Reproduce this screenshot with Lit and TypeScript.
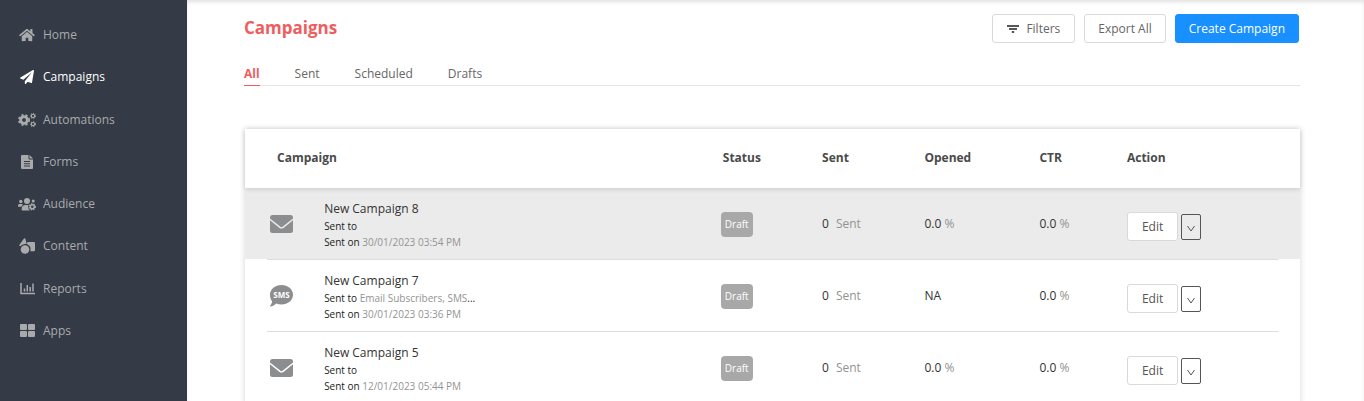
import { LitElement, html, svg, css, nothing, TemplateResult } from "lit";
import { customElement, property, state } from "lit/decorators.js";
import { classMap } from "lit/directives/class-map.js";

const gear = (cx: number, cy: number, r: number, teeth: number, w: number, hole = 0.44) => {
  const step = (2 * Math.PI * (r + w / 2)) / (teeth * 2);
  return svg`
    <circle cx=${cx} cy=${cy} r=${(r * (1 + hole)) / 2} fill="none" stroke="currentColor" stroke-width=${r * (1 - hole)}></circle>
    <circle cx=${cx} cy=${cy} r=${r + w / 2 - 0.2} fill="none" stroke="currentColor" stroke-width=${w + 0.4}
      stroke-dasharray="${step} ${step}"></circle>`;
};

const icons: Record<string, TemplateResult> = {
  home: html`<svg width="16" height="14" viewBox="0 0 576 512"><path fill="currentColor" d="M280.37 148.26L96 300.11V464a16 16 0 0 0 16 16l112.06-.29a16 16 0 0 0 15.92-16V368a16 16 0 0 1 16-16h64a16 16 0 0 1 16 16v95.64a16 16 0 0 0 16 16.05L464 480a16 16 0 0 0 16-16V300L295.67 148.26a12.19 12.19 0 0 0-15.3 0zM571.6 251.47L488 182.56V44.05a12 12 0 0 0-12-12h-56a12 12 0 0 0-12 12v72.61L318.47 43a48 48 0 0 0-61 0L4.34 251.47a12 12 0 0 0-1.6 16.9l25.5 31A12 12 0 0 0 45.15 301l235.22-193.74a12.19 12.19 0 0 1 15.3 0L530.9 301a12 12 0 0 0 16.9-1.6l25.5-31a12 12 0 0 0-1.7-16.93z"/></svg>`,
  campaigns: html`<svg width="14" height="14" viewBox="0 0 512 512"><path fill="currentColor" d="M476 3.2L12.5 270.6c-18.1 10.4-15.8 35.6 2.2 43.2L121 358.4l287.3-253.2c5.5-4.9 13.3 2.6 8.6 8.3L176 407v80.5c0 23.6 28.5 32.9 42.5 15.8L282 426l124.6 52.2c14.2 6 30.4-2.9 33-18.2l72-432C515 7.8 493.3-6.8 476 3.2z"/></svg>`,
  automations: html`<svg width="18" height="14" viewBox="0 0 18 14">${gear(6, 7, 4.8, 8, 1.2, 0.4)}${gear(15, 2.9, 2.2, 8, 0.7, 0.5)}${gear(15, 11.1, 2.2, 8, 0.7, 0.5)}</svg>`,
  forms: html`<svg width="12" height="14" viewBox="0 0 12 14"><path fill="currentColor" fill-rule="evenodd" d="M1 0h6.5v3.5a1 1 0 0 0 1 1H12V13a1 1 0 0 1-1 1H1a1 1 0 0 1-1-1V1a1 1 0 0 1 1-1zM3 6v1h6V6zm0 2.2v1h6v-1zm0 2.3v1h6v-1z"/><path fill="currentColor" d="M8.5 0L12 3.5H8.5z"/></svg>`,
  audience: html`<svg width="18" height="13" viewBox="0 0 18 13"><g fill="currentColor"><circle cx="2.8" cy="3.5" r="1.7"/><circle cx="9" cy="3" r="3"/><circle cx="15.2" cy="3" r="1.5"/><path d="M0 8.8V7.6C0 6.6.8 5.9 1.8 5.9h2c.5 0 .9.2 1.2.5C4.2 7 3.7 7.8 3.5 8.8zM3.7 12.2v-1.4C3.7 8.6 5.3 7 7.3 7h3.2c-.8 2-.2 4 1.4 5.5H4.7c-.6 0-1 0-1-.3z"/></g>${gear(14.3, 8.8, 2.8, 8, 0.9, 0.45)}</svg>`,
  content: html`<svg width="16" height="16" viewBox="0 0 16 16"><g fill="currentColor"><path d="M5 .6a.8.8 0 0 1 1.3 0L7.7 6C5.5 5.8 3.5 6.3 1.8 8H.9a.7.7 0 0 1-.6-1z"/><circle cx="6" cy="11.5" r="4.3"/><path d="M8.3 4H15a1 1 0 0 1 1 1v7.2a1 1 0 0 1-1 1h-3.6C12 10 11.3 7.5 8.3 6.5z"/></g></svg>`,
  reports: html`<svg width="15" height="12" viewBox="0 0 15 12"><path fill="none" stroke="currentColor" stroke-width="1.5" d="M1 0v10.5h14M4.5 8.5v-3M7.3 8.5V2M10.2 8.5V4M13 8.5V.5"/></svg>`,
  apps: html`<svg width="15" height="13" viewBox="0 0 15 13"><g fill="currentColor"><rect width="7" height="6" rx="1"/><rect x="8" width="7" height="6" rx="1"/><rect y="7" width="7" height="6" rx="1"/><rect x="8" y="7" width="7" height="6" rx="1"/></g></svg>`,
  email: html`<svg width="23" height="18" viewBox="0 0 23 18"><rect width="23" height="18" rx="2.5" fill="#8c8d8f"/><path d="M-.5 4L10 12.3Q11.5 13.4 13 12.3L23.5 4" fill="none" class="fold" stroke-width="1.5"/></svg>`,
  sms: html`<svg width="23" height="22" viewBox="0 0 23 22"><path fill="#8c8d8f" d="M11.5 0C17.9 0 23 4.3 23 9.7s-5.1 9.8-11.5 9.8c-1.9 0-3.6-.4-5.2-1C4.7 20 2.7 21.3.3 21.5c-.4 0-.4-.4-.2-.7 1-1.1 1.8-2.6 2-4.3C.8 14.7 0 12.3 0 9.7 0 4.3 5.1 0 11.5 0z"/><text x="11.5" y="13" text-anchor="middle" fill="#fff" font-size="8" font-weight="700">SMS</text></svg>`,
  filter: html`<svg width="12" height="8" viewBox="0 0 12 8"><path stroke="#222" stroke-width="1.5" d="M0 1h12M2 4h8M4.8 7h2.4"/></svg>`,
  chevron: html`<svg width="8" height="7" viewBox="0 0 8 7"><path fill="none" stroke="#555" d="M.5 1L4 6l3.5-5"/></svg>`,
};

interface Campaign {
  name: string;
  kind: "email" | "sms";
  to?: string;
  on: string;
  opened: string | null;
}

const campaigns: Campaign[] = [
  { name: "New Campaign 8", kind: "email", on: "30/01/2023 03:54 PM", opened: "0.0" },
  { name: "New Campaign 7", kind: "sms", to: "Email Subscribers, SMS", on: "30/01/2023 03:36 PM", opened: null },
  { name: "New Campaign 5", kind: "email", on: "12/01/2023 05:44 PM", opened: "0.0" },
];

@customElement("side-nav")
class SideNav extends LitElement {
  static styles = css`
    :host { display: block; background: #343a46; }
    .nav { display: grid; grid-auto-rows: 1fr; height: 338px; padding-top: 14px; }
    .link { display: flex; align-items: center; gap: 7px; padding-left: 18px; color: #a9aaac; text-decoration: none; }
    .active { color: #fff; }
    .icon { display: flex; justify-content: center; width: 18px; }
  `;
  render() {
    return html`<nav class="nav">
      ${["Home", "Campaigns", "Automations", "Forms", "Audience", "Content", "Reports", "Apps"].map(
        (n) => html`<a class=${classMap({ link: true, active: n === "Campaigns" })} href="#${n.toLowerCase()}"
          ><span class="icon">${icons[n.toLowerCase()]}</span>${n}</a>`
      )}
    </nav>`;
  }
}

@customElement("campaign-table")
class CampaignTable extends LitElement {
  @property({ attribute: false }) rows: Campaign[] = [];

  static styles = css`
    :host { display: block; box-shadow: 0 0 6px rgba(0, 0, 0, 0.17); }
    .table { width: 100%; table-layout: fixed; border-spacing: 0; }
    .c-icon { width: 7.5%; }
    .c-name { width: 37.6%; }
    .c-status { width: 9.6%; }
    .c-sent { width: 9.7%; }
    .c-opened { width: 10.9%; }
    .c-ctr { width: 8.3%; }
    .head { position: relative; z-index: 1; background: #fff; box-shadow: 0 1px 5px rgba(0, 0, 0, 0.15); }
    th { height: 57px; padding: 0 0 2px; text-align: left; font-weight: 700; color: #4a4a4a; }
    th:first-child { padding-left: 32px; }
    th.status { padding-left: 2px; }
    td { height: 72px; padding: 0; color: #333; }
    .row { --row: #fff; background: linear-gradient(#ddd, #ddd) center bottom / calc(100% - 43px) 1px no-repeat,
      linear-gradient(var(--row), var(--row)) top / 100% calc(100% - 1px) no-repeat; }
    .current { --row: #ebebeb; }
    .kind { padding-left: 25px; }
    .kind svg { display: block; }
    .fold { stroke: var(--row); }
    .info { padding-top: 2px; height: 70px; }
    .name { line-height: 18px; }
    .meta { font-size: 10px; line-height: 16px; color: #222; white-space: nowrap; }
    .muted { color: #939393; }
    .badge { display: inline-block; padding: 0 4px; border-radius: 4px; background: #a8a8a8; color: #fff; font-size: 10px; line-height: 25px; }
    .count { margin-right: 7px; }
    .actions { display: flex; align-items: center; gap: 3px; padding-top: 5px; }
    .edit { height: 29px; padding: 0 14px; border: 1px solid #d9d9d9; border-radius: 3px; background: #fff; color: #555; font: inherit; }
    .more { display: flex; align-items: center; justify-content: center; width: 20px; height: 26px; padding: 3px 0 0; border: 1px solid #555; border-radius: 2px; background: transparent; }
  `;

  render() {
    return html`<table class="table">
      <colgroup>
        <col class="c-icon" /><col class="c-name" /><col class="c-status" /><col class="c-sent" />
        <col class="c-opened" /><col class="c-ctr" /><col />
      </colgroup>
      <thead>
        <tr class="head">
          <th colspan="2">Campaign</th><th class="status">Status</th><th>Sent</th><th>Opened</th><th>CTR</th><th>Action</th>
        </tr>
      </thead>
      <tbody>
        ${this.rows.map(
          (c, i) => html`<tr class=${classMap({ row: true, current: i === 0 })}>
            <td class="kind">${icons[c.kind]}</td>
            <td class="info">
              <div class="name">${c.name}</div>
              <div class="meta">Sent to ${c.to ? html`<span class="muted">${c.to}</span>...` : nothing}</div>
              <div class="meta">Sent on <span class="muted">${c.on}</span></div>
            </td>
            <td><span class="badge">Draft</span></td>
            <td><span class="count">0</span><span class="muted">Sent</span></td>
            <td>${c.opened === null ? "NA" : html`${c.opened} <span class="muted">%</span>`}</td>
            <td>0.0 <span class="muted">%</span></td>
            <td>
              <div class="actions">
                <button class="edit">Edit</button>
                <button class="more" aria-label="More actions">${icons.chevron}</button>
              </div>
            </td>
          </tr>`
        )}
      </tbody>
    </table>`;
  }
}

@customElement("app-root")
class AppRoot extends LitElement {
  @state() private tab = "All";

  static styles = css`
    :host { display: flex; height: 100vh; overflow: hidden; background: #fff; font: 12px/18px "Open Sans", "Noto Sans", sans-serif; }
    .side { flex: 0 0 187px; }
    .main { flex: 1; min-width: 0; padding: 14px 64px 0 57px; box-shadow: inset 0 3px 4px -1px rgba(0, 0, 0, 0.12); }
    .top { display: flex; align-items: flex-start; justify-content: space-between; }
    .title { margin: 0; font-size: 17px; line-height: 28px; font-weight: 700; color: #ee5e5e; }
    .buttons { display: flex; align-items: center; gap: 9px; padding-right: 1px; }
    .btn { display: flex; align-items: center; gap: 7px; height: 29px; padding: 0 13px; border: 1px solid #d9d9d9; border-radius: 3px; background: #fff; color: #666; font: inherit; }
    .filters { padding: 0 14px; }
    .primary { border-color: #1890ff; background: #1890ff; color: #fff; }
    .tabs { display: flex; gap: 35px; margin-top: 19px; border-bottom: 1px solid #e4e4e4; }
    .tab { margin-bottom: -1px; padding: 3px 0 2px; border: 0; border-bottom: 1px solid transparent; background: none; color: #666; font: inherit; }
    .on { border-color: #ee5e5e; color: #ee5e5e; font-weight: 700; }
    .list { margin: 43px 0 0 1px; }
  `;

  render() {
    return html`
      <side-nav class="side"></side-nav>
      <main class="main">
        <header class="top">
          <h1 class="title">Campaigns</h1>
          <div class="buttons">
            <button class="btn filters">${icons.filter}Filters</button>
            <button class="btn">Export All</button>
            <button class="btn primary">Create Campaign</button>
          </div>
        </header>
        <div class="tabs" role="tablist">
          ${["All", "Sent", "Scheduled", "Drafts"].map(
            (t) => html`<button role="tab" aria-selected=${t === this.tab} class=${classMap({ tab: true, on: t === this.tab })}
              @click=${() => (this.tab = t)}>${t}</button>`
          )}
        </div>
        <campaign-table class="list" .rows=${campaigns}></campaign-table>
      </main>`;
  }
}
